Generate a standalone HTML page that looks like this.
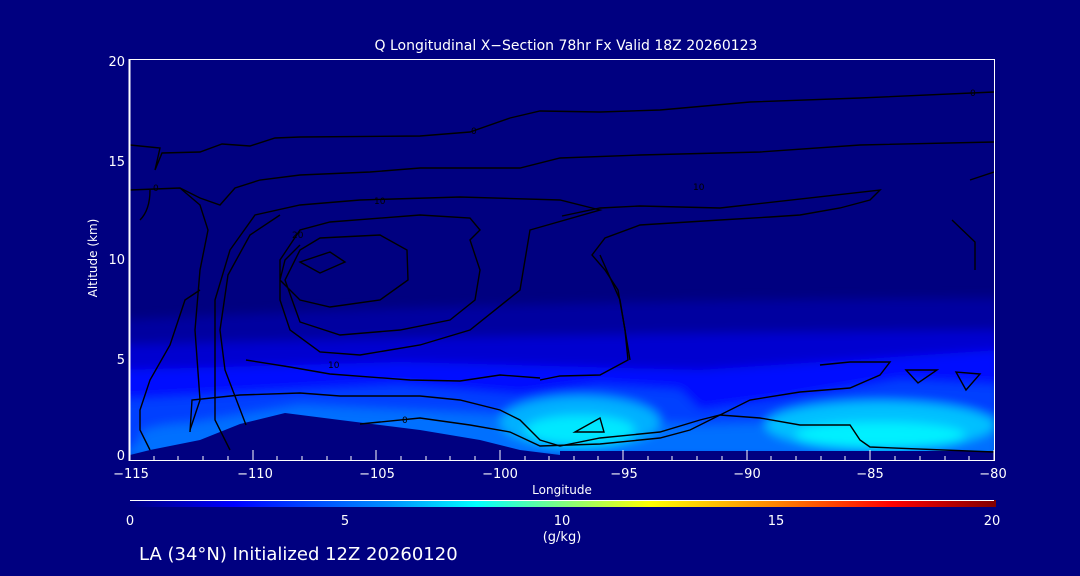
<!DOCTYPE html>
<html><head><style>
html,body{margin:0;padding:0;background:#000080;width:1080px;height:576px;overflow:hidden}
svg{display:block}
text{font-family:"DejaVu Sans","Liberation Sans",sans-serif;fill:#fff}
</style></head><body>
<svg width="1080" height="576" viewBox="0 0 1080 576">
<defs>
<filter id="b" x="-10%" y="-50%" width="120%" height="200%"><feGaussianBlur stdDeviation="5"/></filter>
<linearGradient id="cb" x1="0" x2="1">
<stop offset="0" stop-color="#000080"/><stop offset="0.12" stop-color="#0000ff"/><stop offset="0.3" stop-color="#0090ff"/><stop offset="0.4" stop-color="#00ffff"/><stop offset="0.5" stop-color="#80ff80"/><stop offset="0.6" stop-color="#ffff00"/><stop offset="0.75" stop-color="#ff8000"/><stop offset="0.88" stop-color="#ff0000"/><stop offset="1" stop-color="#800000"/>
</linearGradient>
<clipPath id="pc"><rect x="130" y="60" width="864" height="395"/></clipPath>
</defs>
<text x="566" y="50" font-size="14" text-anchor="middle">Q Longitudinal X−Section 78hr  Fx Valid 18Z 20260123</text>
<g clip-path="url(#pc)">
<rect x="130" y="60" width="864" height="395" fill="#000080"/>
<g filter="url(#b)">
<path d="M120 320 Q500 300 1000 298 L1000 460 L120 460Z" fill="#0000a0"/>
<path d="M120 345 Q500 335 1000 330 L1000 460 L120 460Z" fill="#0000d0"/>
<path d="M120 370 L400 362 L700 370 L1000 350 L1000 460 L120 460Z" fill="#0010ff"/>
<path d="M120 400 L400 385 L520 395 L600 385 L680 390 L700 410 L780 400 L900 380 L1000 385 L1000 460 L120 460Z" fill="#0040ff"/>
<path d="M150 430 L300 405 L500 415 L700 425 L1000 415 L1000 460 L120 460Z" fill="#0070ff"/>
<ellipse cx="580" cy="422" rx="80" ry="26" fill="#00b0ff"/>
<ellipse cx="880" cy="425" rx="115" ry="24" fill="#00c0ff"/>
<ellipse cx="580" cy="430" rx="55" ry="15" fill="#00e8ff"/>
<ellipse cx="880" cy="435" rx="85" ry="13" fill="#00f0ff"/>
<ellipse cx="200" cy="435" rx="60" ry="12" fill="#0070ff"/>
</g>
<path d="M130 455 L150 450 L200 440 L240 424 L285 413 L340 420 L420 430 L480 440 L520 450 L560 455Z" fill="#000080"/>
<path d="M560 456 L994 456 L994 451 L560 451Z" fill="#000080"/>
<g fill="none" stroke="#000" stroke-width="1.4">
<path d="M130 145 L160 148 L155 170 L162 153 L200 152 L222 144 L250 146 L275 138 L300 137 L420 136 L470 132 L510 118 L540 111 L600 112 L660 110 L750 102 L860 98 L994 92"/>
<path d="M130 190 L180 188 L200 198 L220 205 L235 188 L260 180 L300 175 L370 172 L420 168 L520 168 L560 158 L640 155 L760 152 L860 145 L994 142"/>
<path d="M180 188 L200 205 L208 230 L200 270 L195 330 L200 400 L190 430"/>
<path d="M150 190 Q150 210 140 220"/>
<path d="M230 450 L215 420 L215 300 L230 250 L255 215 L300 205 L360 200 L460 197 L560 200 L600 210 L530 230 L520 290 L470 330 L420 345 L360 355 L320 352 L290 330 L280 300 L280 260 L300 230 L330 222 L420 215 L470 218 L480 230 L470 240 L480 270 L475 300 L450 320 L400 330 L340 335 L300 322 L285 280 L300 250 L320 238 L380 235 L407 250 L408 280 L380 300 L330 307 L300 300 L280 280 L285 260 L300 245 M246 425 L225 370 L220 330 L228 275 L250 235 L280 215"/>
<path d="M300 262 L330 252 L345 262 L320 273Z"/>
<path d="M562 216 L600 208 L640 206 L720 208 L880 190 L870 200 L840 208 L800 215 L770 217 L720 220 L640 225 L605 238 L592 255 L605 270 L618 290 L625 330 L628 360 L600 375 L560 376 L540 380"/>
<path d="M246 360 L290 367 L330 374 L410 380 L460 381 L500 375 L540 378"/>
<path d="M600 255 L620 300 L625 330 L630 360"/>
<path d="M150 450 L140 430 L140 410 L150 380 L170 345 L185 300 L200 290"/>
<path d="M190 432 L192 400 L240 395 L300 393 L340 396 L420 396 L460 400 L500 410 L520 420 L540 440 L560 446 L600 438 L660 432 L700 420 L720 415 L760 418 L800 425 L850 425 L860 440 L870 447 L994 452"/>
<path d="M360 424 L380 422 L420 418 L470 425 L510 432 L540 446 L600 444 L660 438 L690 430 L750 400 L800 392 L850 388 L880 375 L890 362 L850 362 L820 365"/>
<path d="M575 432 L600 418 L604 432 Z"/>
<path d="M906 370 L918 383 L937 370 Z"/>
<path d="M956 372 L966 390 L980 374 Z"/>
<path d="M952 220 L975 242 L975 270 M994 172 L970 180"/>
</g>
<g font-size="9" fill="#000"><text x="471" y="134" style="fill:#000">0</text><text x="970" y="96" style="fill:#000">0</text><text x="153" y="191" style="fill:#000">0</text><text x="374" y="204" style="fill:#000">10</text><text x="292" y="238" style="fill:#000">20</text><text x="328" y="368" style="fill:#000">10</text><text x="402" y="423" style="fill:#000">0</text><text x="693" y="190" style="fill:#000">10</text></g>
</g>
<g stroke="#fff" stroke-width="1" fill="none">
<path d="M130 59.5 L994 59.5 M994.5 59 L994.5 460"/>
<path d="M129.5 59 L129.5 461" stroke-width="2"/>
<path d="M129 460.5 L995 460.5"/>
</g>
<g stroke="#fff" stroke-width="1">
<path d="M130 460 v-10 M253 460 v-10 M376 460 v-10 M500 460 v-10 M623 460 v-10 M747 460 v-10 M870 460 v-10 M994 460 v-10"/>
<path d="M154 460 v-4 M178 460 v-4 M203 460 v-4 M228 460 v-4 M277 460 v-4 M302 460 v-4 M327 460 v-4 M351 460 v-4 M401 460 v-4 M426 460 v-4 M450 460 v-4 M475 460 v-4 M525 460 v-4 M549 460 v-4 M574 460 v-4 M598 460 v-4 M648 460 v-4 M672 460 v-4 M697 460 v-4 M722 460 v-4 M771 460 v-4 M796 460 v-4 M821 460 v-4 M845 460 v-4 M895 460 v-4 M920 460 v-4 M945 460 v-4 M969 460 v-4"/>
</g>
<g font-size="13" text-anchor="middle">
<text x="131" y="478">−115</text><text x="255" y="478">−110</text><text x="377" y="478">−105</text><text x="500" y="478">−100</text><text x="624" y="478">−95</text><text x="747" y="478">−90</text><text x="870" y="478">−85</text><text x="993" y="478">−80</text>
</g>
<text x="562" y="494" font-size="12" text-anchor="middle">Longitude</text>
<g font-size="13" text-anchor="end">
<text x="125" y="460">0</text><text x="125" y="364">5</text><text x="125" y="264">10</text><text x="125" y="166">15</text><text x="125" y="66">20</text>
</g>
<text transform="translate(97,258) rotate(-90)" font-size="12" text-anchor="middle">Altitude (km)</text>
<rect x="130" y="500" width="866" height="7" fill="url(#cb)"/>
<rect x="130" y="500" width="864" height="1" fill="#fff"/>
<g font-size="13" text-anchor="middle">
<text x="130" y="525">0</text><text x="345" y="525">5</text><text x="562" y="525">10</text><text x="776" y="525">15</text><text x="992" y="525">20</text>
</g>
<text x="562" y="541" font-size="13" text-anchor="middle">(g/kg)</text>
<text x="139" y="560" font-size="18">LA (34°N) Initialized 12Z 20260120</text>
</svg>
</body></html>
